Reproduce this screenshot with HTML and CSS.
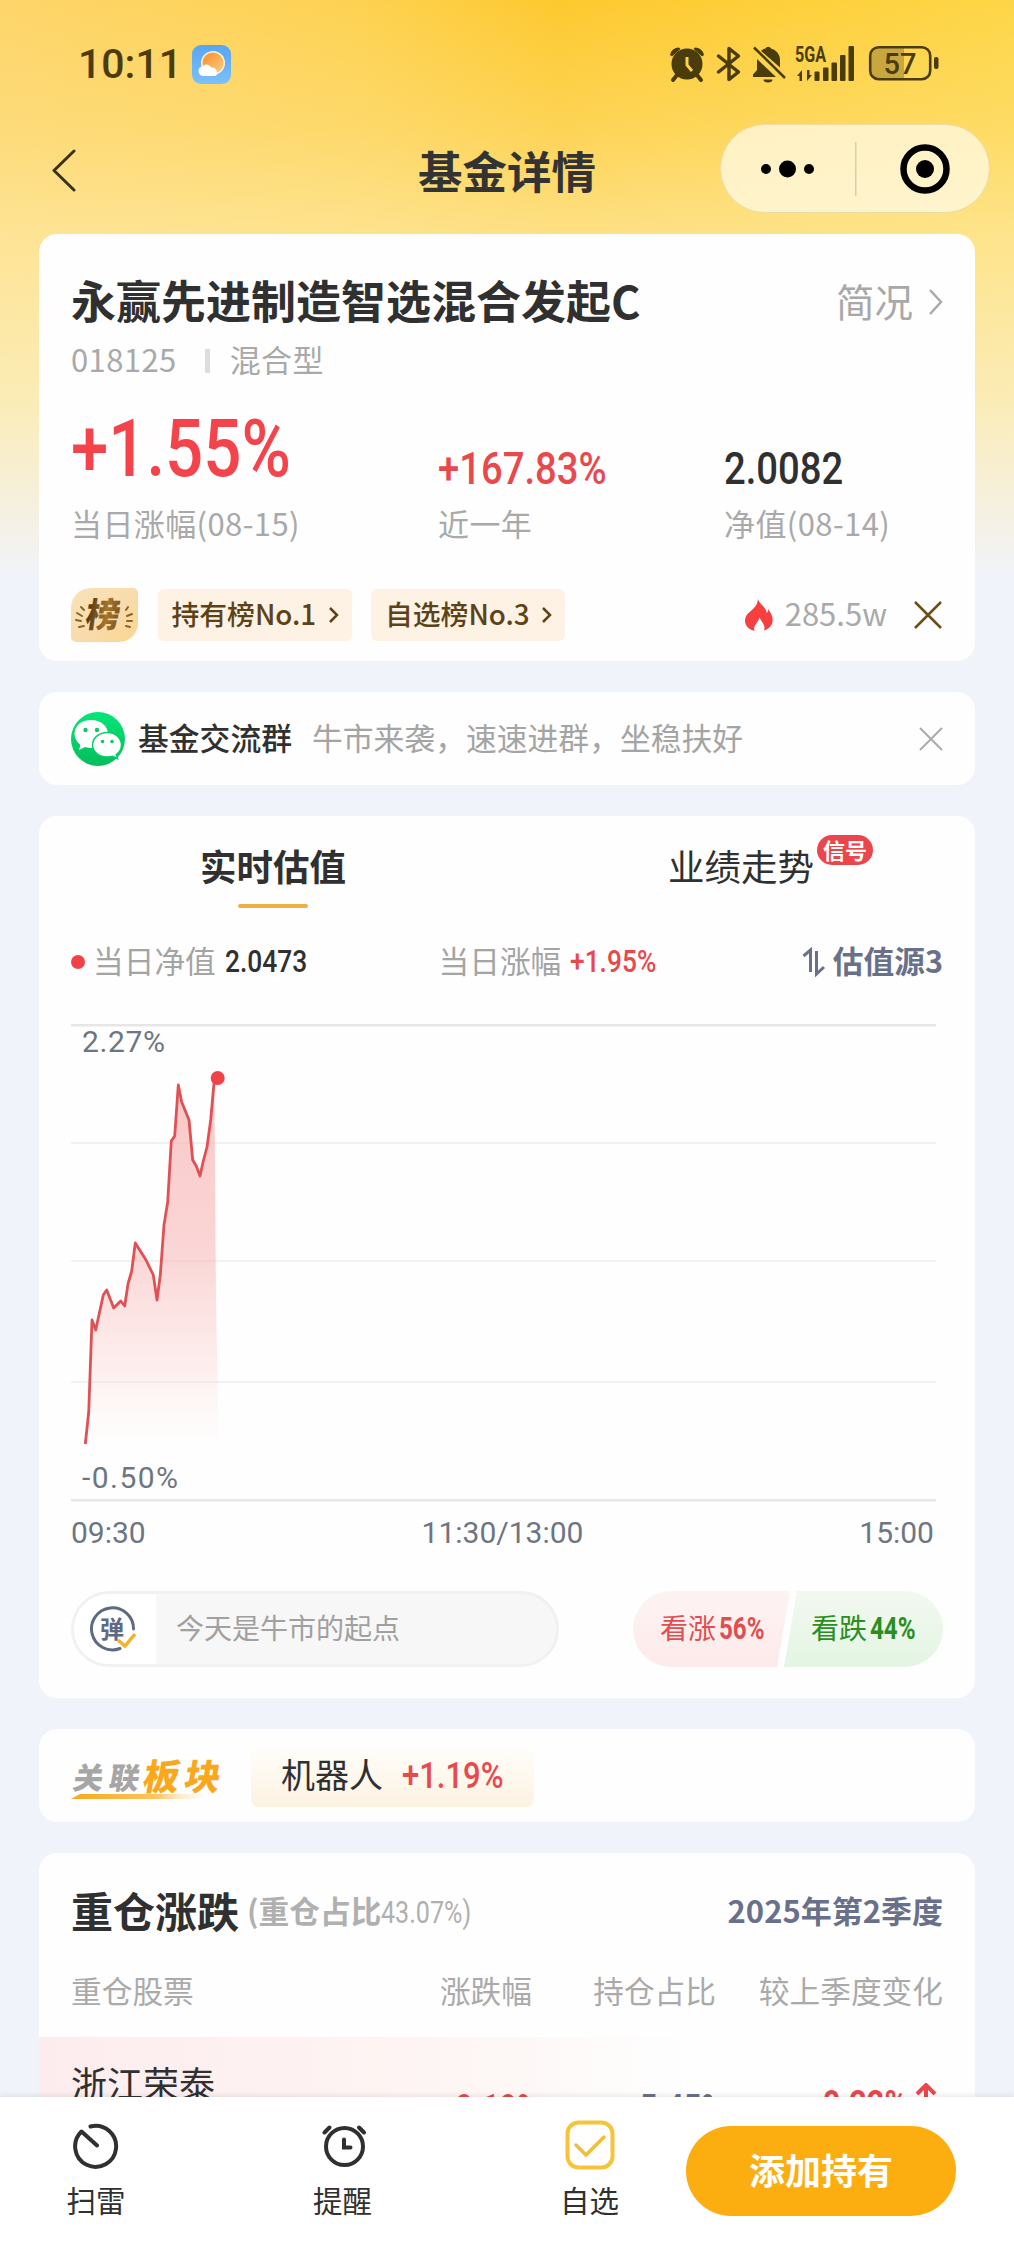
FILE: index.html
```html
<!DOCTYPE html>
<html lang="zh-CN">
<head>
<meta charset="utf-8">
<title>基金详情</title>
<link rel="stylesheet" href="styles.css">
</head>
<body>
<div class="app">
  <div class="screen">
    <div class="status">
      <span class="clock">10:11</span>
      <svg class="weather" width="39" height="39" viewBox="0 0 39 39">
        <defs>
          <linearGradient id="sky" x1="0" y1="0" x2="0" y2="1"><stop offset="0" stop-color="#58a4f4"/><stop offset="1" stop-color="#7cc0fa"/></linearGradient>
          <linearGradient id="sun" x1="0" y1="0" x2="1" y2="1"><stop offset="0" stop-color="#f78c2d"/><stop offset="1" stop-color="#fdcf7a"/></linearGradient>
        </defs>
        <rect width="39" height="39" rx="9" fill="url(#sky)"/>
        <circle cx="21" cy="18" r="12" fill="#fff3d6"/>
        <circle cx="21" cy="18" r="10.500" fill="url(#sun)"/>
        <path d="M12 31a5 5 0 0 1-1-10a5.500 5.500 0 0 1 8.500 1.500a5 5 0 0 1 5.500 4.500a3 3 0 0 1-2 4z" fill="#fff"/>
      </svg>
      <svg class="sysicons" width="274" height="40" viewBox="668 43 274 40">
        <g fill="#4b3c0c">
          <circle cx="687" cy="64" r="15.500"/>
          <path d="M670 55a9 9 0 0 1 9-7.500l1.500 1.500l-8.500 7.500zM704 55a9 9 0 0 0-9-7.500l-1.500 1.500l8.500 7.500z"/>
          <path d="M677 75l-4 5M697 75l4 5" stroke="#4b3c0c" stroke-width="4" stroke-linecap="round"/>
          <path d="M687 57v8l5 6" fill="none" stroke="#fcd250" stroke-width="3"/>
          <path d="M718.500 56l20 16l-9.500 7.500v-31l9.500 7.500l-20 16" fill="none" stroke="#4b3c0c" stroke-width="3.500" stroke-linejoin="round" stroke-linecap="round"/>
          <path d="M757 59l19 18h-23v-2.500l4-4.500zM761 51a8 8 0 0 1 4.500-2.500a3 3 0 0 1 5.500 0a11.500 11.500 0 0 1 9 11v8z"/>
          <path d="M754 47.500l31 30.500" stroke="#4b3c0c" stroke-width="2.500"/>
          <path d="M763.500 79.500h9a4.500 3 0 0 1-9 0z"/>
          <text x="795" y="62" class="net" textLength="31" lengthAdjust="spacingAndGlyphs">5GA</text>
          <path d="M797 76l5-6v11h-2.500v-5zM812 75l-5 6v-11h2.500v5z"/>
          <rect x="814.500" y="71.500" width="5" height="9.500" rx="1"/>
          <rect x="823" y="67.500" width="5.500" height="13.500" rx="1"/>
          <rect x="831.500" y="62.500" width="5.500" height="18.500" rx="1"/>
          <rect x="840" y="55" width="5.500" height="26" rx="1"/>
          <rect x="848.500" y="46" width="5.500" height="35" rx="1"/>
          <path d="M878 47h26v32h-26a8 8 0 0 1-8-8v-16a8 8 0 0 1 8-8z" fill="#c9a73f"/>
          <rect x="870.200" y="47.200" width="60" height="32" rx="8.500" fill="none" stroke="#4b3c0c" stroke-width="2.600"/>
          <rect x="934" y="57" width="4.500" height="12" rx="2"/>
          <text x="900" y="74" class="bat" text-anchor="middle">57</text>
        </g>
      </svg>
    </div>

    <div class="nav">
      <svg class="back" width="26" height="44" viewBox="0 0 26 44"><path d="M23 3L3 22.500L23 42" fill="none" stroke="#38321f" stroke-width="3" stroke-linecap="round" stroke-linejoin="round"/></svg>
      <h1 class="nav-title">基金详情</h1>
      <div class="capsule">
        <svg width="268" height="87" viewBox="0 0 268 87">
          <circle cx="45" cy="44" r="5"/><circle cx="66.500" cy="44" r="8.500"/><circle cx="88" cy="44" r="5"/>
          <rect x="134" y="17" width="1.500" height="54" fill="#dccf9f"/>
          <circle cx="204" cy="44" r="21.500" fill="none" stroke="#000" stroke-width="6.500"/><circle cx="204" cy="44" r="9"/>
        </svg>
      </div>
    </div>

    <main class="cards">
      <section class="card fund">
        <div class="fund-head">
          <h2>永赢先进制造智选混合发起C</h2>
          <span class="brief">简况<svg width="16" height="28" viewBox="0 0 16 28"><path d="M2 2l11 12L2 26" fill="none" stroke="#aaa" stroke-width="2.500"/></svg></span>
        </div>
        <div class="fund-meta"><span>018125</span><i class="bar"></i><span>混合型</span></div>
        <div class="stats">
          <div class="stat"><div class="val big"><span class="num">+1.55%</span></div><div class="lab">当日涨幅(08-15)</div></div>
          <div class="stat"><div class="val red"><span class="num">+167.83%</span></div><div class="lab">近一年</div></div>
          <div class="stat"><div class="val"><span class="num">2.0082</span></div><div class="lab">净值(08-14)</div></div>
        </div>
        <div class="tags">
          <svg class="rank" width="67" height="54" viewBox="0 0 67 54">
            <defs>
              <linearGradient id="gold" x1="0" y1="0" x2="1" y2="1"><stop offset="0" stop-color="#fae3b8"/><stop offset=".5" stop-color="#f8dcae"/><stop offset="1" stop-color="#fcd590"/></linearGradient>
              <linearGradient id="bronze" x1="0" y1="0" x2="1" y2="0"><stop offset="0" stop-color="#4f3511"/><stop offset=".6" stop-color="#a6752f"/><stop offset="1" stop-color="#7a5420"/></linearGradient>
            </defs>
            <path d="M20 0h42a5 5 0 0 1 5 5v30a19 19 0 0 1-19 19H5a5 5 0 0 1-5-5V20A20 20 0 0 1 20 0z" fill="url(#gold)"/>
            <g stroke="#8a6428" stroke-width="2" stroke-linecap="round"><path d="M10 19l3 3M6 25l5 3M5 32l5 1M8 39l5-1"/><path d="M57 19l-2 3M61 26l-5 2M61 33l-5 0M59 39l-4-1"/></g>
            <text x="14" y="39" class="rank-text" transform="skewX(-8) translate(5 0)" fill="url(#bronze)">榜</text>
          </svg>
          <span class="tag">持有榜No.1<svg width="12" height="18" viewBox="0 0 12 18"><path d="M2 2l7 7l-7 7" fill="none" stroke="#5c4216" stroke-width="2.500"/></svg></span>
          <span class="tag">自选榜No.3<svg width="12" height="18" viewBox="0 0 12 18"><path d="M2 2l7 7l-7 7" fill="none" stroke="#5c4216" stroke-width="2.500"/></svg></span>
          <span class="heat">
            <svg width="28" height="32" viewBox="0 0 28 32"><path d="M13 0c1 5 9 9 8.500 14c1.500-.5 1.500-3 1.500-4c5 6 6.500 13 2 18c-2 2-4 3-6 3.500c2-5-2-8-4.500-13c-1 5-7 8-5 13.500C4 30.500 0 27 0 21.500C0 14 8 12 11.500 5.500C12.500 4 12.500 2 13 0z" fill="#f5403f"/></svg>
            <span>285.5w</span>
          </span>
          <svg class="close" width="30" height="30" viewBox="0 0 30 30"><path d="M2 2l26 26M28 2L2 28" stroke="#6d4d17" stroke-width="2.500"/></svg>
        </div>
      </section>

      <section class="card group">
        <svg class="wechat" width="54" height="54" viewBox="0 0 54 54">
          <defs><linearGradient id="wx" x1="0" y1="0" x2="0" y2="1"><stop offset="0" stop-color="#06e578"/><stop offset="1" stop-color="#04bd5b"/></linearGradient></defs>
          <circle cx="27" cy="27" r="27" fill="url(#wx)"/>
          <path d="M20 8c-10 0-16.500 6-16.500 14c0 4.500 2.500 8 6 11l-1.500 5l6-3c2 .7 4 1 6 1c9.500 0 17-6 17-14S29.500 8 20 8z" fill="#fff"/>
          <path d="M36.500 20.500c-8.500 0-15 5.500-15 12.500s6.500 12 15 12c2 0 4-.3 5.500-.8l4.500 2.500l-1.200-4.200c3.200-2.300 5.200-5.500 5.200-9.500c0-7-6-12.500-14-12.500z" fill="#fff" stroke="#05cf68" stroke-width="1.500"/>
          <g fill="#11c867"><circle cx="14.500" cy="18" r="2.200"/><circle cx="26" cy="18" r="2.200"/><circle cx="31.500" cy="29.500" r="1.800"/><circle cx="41" cy="29.500" r="1.800"/></g>
        </svg>
        <span class="group-name">基金交流群</span>
        <span class="group-text">牛市来袭，速速进群，坐稳扶好</span>
        <svg class="close" width="24" height="24" viewBox="0 0 24 24"><path d="M1 1l22 22M23 1L1 23" stroke="#aaa" stroke-width="2"/></svg>
      </section>

      <section class="card chart-card">
        <div class="tabs">
          <div class="tab active">实时估值</div>
          <div class="tab">业绩走势<span class="signal">信号</span></div>
        </div>
        <div class="info">
          <span class="cell"><i class="dot"></i>当日净值<span class="num dark">2.0473</span></span>
          <span class="cell">当日涨幅<span class="num red">+1.95%</span></span>
          <span class="source"><svg width="24" height="30" viewBox="0 0 24 30"><path d="M1.500 9L8.500 3V25M14.500 4V27L22 20" fill="none" stroke="#69718a" stroke-width="3"/></svg>估值源3</span>
        </div>
        <svg class="chart" width="872" height="485" viewBox="71 1020 872 485">
          <defs><linearGradient id="area" x1="0" y1="1080" x2="0" y2="1437" gradientUnits="userSpaceOnUse"><stop offset="0" stop-color="#f8b4b4" stop-opacity=".75"/><stop offset=".5" stop-color="#f8bcbc" stop-opacity=".6"/><stop offset=".8" stop-color="#fbd3d0" stop-opacity=".38"/><stop offset="1" stop-color="#fdf0ea" stop-opacity=".1"/></linearGradient></defs>
          <g fill="#e6e6e7"><rect x="71" y="1024" width="865" height="2.500"/><rect x="71" y="1499" width="865" height="2.500"/></g>
          <g fill="#f1f1f2"><rect x="71" y="1142" width="865" height="2"/><rect x="71" y="1260" width="865" height="2"/><rect x="71" y="1381" width="865" height="2"/></g>
          <path d="M85.300 1437V1444L88.700 1412.500L92 1320L95.700 1330L103.300 1295L106.700 1290L113.700 1308L120.700 1301L124.700 1306L128 1284L131.700 1271L135.300 1243L146 1260L153.300 1275L157 1300L160.300 1275L164 1225L167.700 1202L171.300 1141L174.700 1136L178.300 1085L181.700 1102L189 1120L192.700 1160L196.300 1166L200 1176L203.300 1161L207 1147L210.700 1120L214.300 1080L216 1300L218.500 1437z" fill="url(#area)"/>
          <path d="M85.300 1444L88.700 1412.500L92 1320L95.700 1330L103.300 1295L106.700 1290L113.700 1308L120.700 1301L124.700 1306L128 1284L131.700 1271L135.300 1243L146 1260L153.300 1275L157 1300L160.300 1275L164 1225L167.700 1202L171.300 1141L174.700 1136L178.300 1085L181.700 1102L189 1120L192.700 1160L196.300 1166L200 1176L203.300 1161L207 1147L210.700 1120L214.300 1080" fill="none" stroke="#df5155" stroke-width="2.800" stroke-linejoin="round"/>
          <circle cx="217.700" cy="1078" r="7" fill="#f04247"/>
          <text x="82" y="1052" class="axis-text" textLength="83">2.27%</text>
          <text x="82" y="1488" class="axis-text" textLength="96">-0.50%</text>
        </svg>
        <div class="axis"><span>09:30</span><span>11:30/13:00</span><span>15:00</span></div>
        <div class="actions">
          <div class="barrage">
            <div class="barrage-icon">
              <svg width="48" height="48" viewBox="0 0 48 48"><path d="M44.500 23A21 21 0 1 0 31 42.500" fill="none" stroke="#5e6984" stroke-width="3" stroke-linecap="round"/><text x="23" y="32" text-anchor="middle" class="dan">弹</text><path d="M29 34l7 6l10-12" fill="none" stroke="#f6b125" stroke-width="3.500"/></svg>
            </div>
            <span>今天是牛市的起点</span>
          </div>
          <div class="vote">
            <div class="up">看涨<span class="num">56%</span></div>
            <div class="down">看跌<span class="num">44%</span></div>
          </div>
        </div>
      </section>

      <section class="card sector">
        <svg class="sector-logo" width="154" height="56" viewBox="0 0 154 56">
          <defs><linearGradient id="swoosh"><stop offset="0" stop-color="#f9a81e"/><stop offset=".6" stop-color="#fbc55f"/><stop offset="1" stop-color="#fff" stop-opacity="0"/></linearGradient></defs>
          <g transform="skewX(-10)">
            <text x="8" y="41" class="lg1" textLength="66">关联</text>
            <text x="78" y="42" class="lg2" textLength="77">板块</text>
          </g>
          <path d="M9 46h134v2l-20 3H0z" fill="url(#swoosh)"/>
        </svg>
        <div class="sector-tag">机器人<span class="num red">+1.19%</span></div>
      </section>

      <section class="card holdings">
        <div class="hold-head">
          <h3>重仓涨跌</h3>
          <span class="ratio">(重仓占比<span class="num">43.07%)</span></span>
          <span class="quarter">2025年第2季度</span>
        </div>
        <div class="row cols"><span>重仓股票</span><span>涨跌幅</span><span>持仓占比</span><span>较上季度变化</span></div>
        <div class="row stock">
          <span class="stock-name">浙江荣泰</span>
          <span class="v red"><span class="num">+9.19%</span></span>
          <span class="v slate"><span class="num">5.45%</span></span>
          <span class="v red"><span class="num">0.22%</span><svg width="22" height="28" viewBox="0 0 22 28"><path d="M11 2v25M2 11l9-9l9 9" fill="none" stroke="#e8494d" stroke-width="4"/></svg></span>
        </div>
      </section>
    </main>
  </div>

  <footer class="toolbar">
    <div class="tool">
      <svg width="50" height="50" viewBox="0 0 50 50"><path d="M19.500 6.500A20.500 20.500 0 1 1 10.500 11.500L26 25.500" fill="none" stroke="#303030" stroke-width="4" stroke-linecap="round" stroke-linejoin="round"/></svg>
      扫雷
    </div>
    <div class="tool">
      <svg width="50" height="50" viewBox="0 0 50 50"><g fill="none" stroke="#303030" stroke-width="4" stroke-linecap="round"><circle cx="26.500" cy="26.500" r="18.500"/><path d="M26 19.500v8h6.500M6.500 12.500l5-5M46 12.500l-5-5"/></g></svg>
      提醒
    </div>
    <div class="tool">
      <svg width="50" height="50" viewBox="0 0 50 50"><rect x="2.500" y="2.500" width="45" height="45" rx="11" fill="none" stroke="#f6c33a" stroke-width="4"/><path d="M11 25l10 10L39 17" fill="none" stroke="#efbe3c" stroke-width="3.500" stroke-linecap="round"/></svg>
      自选
    </div>
    <button class="add">添加持有</button>
  </footer>
</div>
</body>
</html>
```

FILE: styles.css
```css
* { box-sizing: border-box; margin: 0; padding: 0; }
body {
  width: 1014px;
  font-family: "Noto Sans CJK SC", "Noto Sans", sans-serif;
  color: #303030;
}
svg { display: block; flex: none; }
i { font-style: normal; }

.app { height: 2246px; display: flex; flex-direction: column; background: #f0f3f9; }
.screen {
  height: 2097px;
  flex: none;
  overflow: hidden;
  background:
    linear-gradient(180deg, rgba(254,228,146,0) 0, rgba(254,228,146,.4) 130px, rgba(254,233,165,.72) 235px, #fbecb6 400px, #f6f0dc 500px, #f0f3f9 575px),
    linear-gradient(90deg, #fdd56a 0, #fdd252 35%, #fdc92f 55%, #fdcf3a 75%, #fdd647 100%);
}

.num {
  font-family: Roboto, "Noto Sans CJK SC", sans-serif;
  font-weight: 500;
  display: inline-block;
  transform: scaleX(.85);
  transform-origin: left center;
  white-space: nowrap;
}
.red { color: #e8494d; }

.status { height: 124px; display: flex; align-items: flex-start; padding: 43px 0 0 78px; }
.clock { font: 500 41px/42px Roboto, sans-serif; color: #4e3b0c; width: 114px; }
.weather { margin-top: 2px; }
.sysicons { margin-left: 437px; }
.net { font: 700 22px Roboto, sans-serif; }
.bat { font: 500 29px Roboto, sans-serif; }

.nav { height: 110px; display: flex; align-items: flex-start; padding-left: 51px; }
.back { margin-top: 24px; }
.nav-title { font-size: 44.500px; line-height: 92px; font-weight: 700; width: 180px; margin-left: 341px; color: #333; white-space: nowrap; }
.capsule { margin-left: 122px; width: 270px; height: 89px; border-radius: 45px; border: 1px solid #e9dca6; background: rgba(255,249,230,.75); }

.cards { display: flex; flex-direction: column; gap: 31px; padding: 0 39px; }
.card { background: #fefefe; border-radius: 18px; flex: none; }

.fund { height: 427px; padding: 37px 32px 0; }
.fund-head { height: 60px; padding-bottom: 2px; display: flex; align-items: center; justify-content: space-between; }
.fund-head h2 { font-size: 45px; line-height: 56px; font-weight: 700; white-space: nowrap; }
.brief { display: flex; align-items: center; gap: 15px; font-size: 38.500px; line-height: 56px; color: #a8a8a8; margin-right: -1px; }
.brief svg { margin-top: 3px; }
.fund-meta { margin-top: 4px; height: 50px; padding-bottom: 3px; display: flex; align-items: center; font-size: 31px; line-height: 46px; letter-spacing: .4px; color: #a9a9a9; }
.bar { width: 5px; height: 24px; margin: 4px 20px 0 28px; background: #ddd; }
.stats { margin-top: 15px; display: grid; grid-template-columns: 367px 286px 1fr; }
.val { height: 100px; padding-top: 46px; font-size: 45px; line-height: 45px; }
.val.big { padding-top: 10px; font-size: 79px; line-height: 79px; color: #f4434a; }
.val .num { line-height: inherit; vertical-align: top; }
.lab { height: 50px; font-size: 31px; line-height: 46px; letter-spacing: .4px; color: #a9a9a9; white-space: nowrap; }
.tags { margin-top: 38px; height: 54px; display: flex; align-items: center; }
.rank-text { font: 900 34px "Noto Sans CJK SC", sans-serif; }
.tag { height: 52px; width: 194px; margin-left: 19.500px; padding: 0 12px 4px 14px; border-radius: 6px; background: #fdf2e3; color: #5c4216; font-size: 27.800px; line-height: 48px; font-weight: 500; display: flex; align-items: center; justify-content: space-between; white-space: nowrap; }
.tag svg { margin-top: 3px; }
.heat { margin-left: auto; display: flex; align-items: center; gap: 12px; font-size: 31px; line-height: 46px; color: #a9a9a9; }
.heat span { padding-bottom: 4px; }
.tags .close { margin-left: 26px; }

.group { height: 93px; padding: 0 32px; display: flex; align-items: center; font-size: 30.800px; line-height: 46px; white-space: nowrap; }
.group span { padding-bottom: 4px; }
.group-name { margin-left: 13px; font-weight: 500; }
.group-text { margin-left: 20px; color: #a4a4a4; }
.group .close { margin-left: auto; }

.chart-card { height: 882px; }
.tabs { display: grid; grid-template-columns: 1fr 1fr; height: 94px; }
.tab { position: relative; justify-self: center; padding-top: 24px; font-size: 36.500px; line-height: 52px; }
.tab.active { font-weight: 700; }
.tab.active::after { content: ""; display: block; width: 70px; height: 4px; margin: 12px auto 0; border-radius: 2px; background: #eeb043; }
.signal { position: absolute; left: 149px; top: 19px; width: 56px; height: 30px; border-radius: 15px; background: #ea464b; color: #fff; font-size: 22px; line-height: 28px; font-weight: 700; text-align: center; }
.info { height: 60px; margin-top: 22px; padding: 0 32px 4px; display: grid; grid-template-columns: 367.500px 1fr auto; align-items: center; font-size: 30.700px; line-height: 46px; color: #a4a4a4; white-space: nowrap; }
.cell { display: flex; align-items: center; }
.cell .num { margin-left: 9px; font-size: 31px; position: relative; top: 2px; }
.dark { color: #303030; }
.dot { width: 14px; height: 14px; border-radius: 7px; background: #f04247; margin: 3px 8px 0 0; }
.source { display: flex; align-items: center; gap: 7px; font-weight: 700; color: #69718a; }
.source svg { margin-top: 4px; }
.chart { margin: 28px 0 0 32px; }
.axis-text { font: 400 30px Roboto, sans-serif; fill: #6e7582; }
.axis { width: 863px; height: 50px; margin: 3px 0 0 32px; display: flex; justify-content: space-between; font: 400 30px/50px Roboto, sans-serif; color: #6e7582; }
.actions { margin: 33px 32px 0; height: 76px; display: flex; justify-content: space-between; }
.barrage { width: 488px; border: 3px solid #f1f1f1; border-radius: 38px; background: #f7f7f7; display: flex; overflow: hidden; color: #a0a0a0; font-size: 28px; line-height: 66px; }
.barrage-icon { width: 82px; background: #fff; padding: 12px 0 0 15px; margin-right: 20px; }
.dan { font: 700 24px "Noto Sans CJK SC", sans-serif; fill: #5e6984; }
.vote { width: 310px; display: flex; font-size: 28px; line-height: 72px; white-space: nowrap; }
.vote .num { font-size: 31px; transform: scaleX(.78); margin-left: 3px; font-weight: 700; }
.up { width: 157px; padding-left: 27px; border-radius: 38px 0 0 38px; background: linear-gradient(180deg, #fdf3f3, #fdeaea); color: #dd4f50; clip-path: polygon(0 0, 100% 0, 144px 100%, 0 100%); }
.down { width: 159px; margin-left: -6px; padding-left: 27px; border-radius: 0 38px 38px 0; background: linear-gradient(180deg, #f3f8f1, #e3f5e2); color: #2a8e20; clip-path: polygon(13px 0, 100% 0, 100% 100%, 0 100%); }

.sector { height: 93px; padding: 0 32px; display: flex; align-items: center; }
.lg1 { font: 900 30px "Noto Sans CJK SC", sans-serif; fill: #a6a6a6; }
.lg2 { font: 900 36px "Noto Sans CJK SC", sans-serif; fill: #f9a81e; }
.sector-tag { margin-left: 26px; width: 283px; height: 62px; padding-left: 30px; border-radius: 8px; background: linear-gradient(180deg, #fffefb, #fdf2e1); font-size: 34px; line-height: 57px; white-space: nowrap; }
.sector-tag .num { margin-left: 19px; font-size: 36.500px; }

.holdings { height: 420px; }
.hold-head { height: 118px; padding: 0 32px 5px; display: flex; align-items: center; white-space: nowrap; }
.hold-head h3 { font-size: 42px; line-height: 60px; font-weight: 700; }
.ratio { margin-left: 8px; font-size: 30.700px; font-weight: 700; color: #b0b0b0; }
.ratio .num { font-weight: 400; transform: scaleX(.81); font-size: 31px; }
.quarter { margin-left: auto; font-size: 31px; font-weight: 700; color: #69718a; }
.row { display: grid; grid-template-columns: 240px 221px 184px 227px; padding: 0 32px; white-space: nowrap; }
.row > :not(:first-child) { text-align: right; }
.cols { height: 66px; font-size: 30.700px; line-height: 37px; color: #aaa; }
.stock { height: 200px; background: linear-gradient(90deg, #fdecee 0, #fdf6f4 45%, #fefefe 70%); }
.stock-name { font-size: 36px; line-height: 52px; padding-top: 19px; }
.v { font-size: 36px; line-height: 42px; padding-top: 46px; }
.v .num { transform-origin: right center; font-weight: 700; margin-right: -8px; }
.v:last-child { display: flex; justify-content: flex-end; gap: 16px; padding-right: 6px; }
.slate { color: #69718a; }

.toolbar { height: 149px; flex: none; position: relative; display: grid; grid-template-columns: 192px 301px 193px 270px; background: #fff; box-shadow: 0 -2px 5px rgba(0,0,0,.08); }
.tool { display: flex; flex-direction: column; align-items: center; gap: 9px; padding-top: 23px; font-size: 29.500px; line-height: 40px; }
.add { margin-top: 29px; height: 90px; border: 0; border-radius: 45px; background: #fcae11; color: #fff; font: 700 36px/82px "Noto Sans CJK SC", sans-serif; padding-bottom: 4px; }
```
